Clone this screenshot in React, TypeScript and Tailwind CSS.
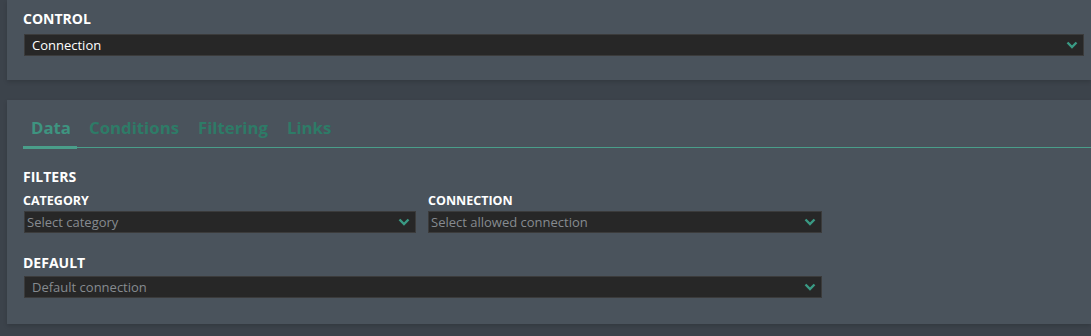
import React from 'react';

const Chevron: React.FC = () => (
  <svg width="12" height="8" viewBox="0 0 12 8" className="shrink-0">
    <polyline points="1.5,1.5 6,6 10.5,1.5" fill="none" stroke="#3a9a84" strokeWidth="2.4" />
  </svg>
);

const Select: React.FC<{ value: string; placeholder?: boolean; tight?: boolean; className?: string }> = ({
  value,
  placeholder,
  tight,
  className = '',
}) => (
  <div
    className={`flex h-[22px] items-center justify-between border border-[#3b3b3b] bg-[#272727] pr-[5px] ${
      tight ? 'pl-[2px]' : 'pl-[7px]'
    } ${className}`}
  >
    <span className={`text-[13px] leading-none ${placeholder ? 'text-[#868b90]' : 'text-white'}`}>{value}</span>
    <Chevron />
  </div>
);

const tabs = ['Data', 'Conditions', 'Filtering', 'Links'];

export default function App() {
  return (
    <div
      className="h-[336px] w-full overflow-hidden bg-[#3c434b] pl-[7px]"
      style={{ fontFamily: '"Open Sans", "Noto Sans", sans-serif' }}
    >
      <div className="flex h-[80px] flex-col bg-[#4a535c] pl-4 pr-[7px] pt-[9px] shadow-[0_2px_4px_rgba(0,0,0,0.15)]">
        <div className="text-[14px] font-bold leading-5 text-white">CONTROL</div>
        <Select value="Connection" className="mt-[5px] ml-px" />
      </div>

      <div className="mt-5 flex h-[224px] flex-col bg-[#4a535c] pl-4 pt-[17px] shadow-[0_2px_4px_rgba(0,0,0,0.15)]">
        <div className="flex">
          {tabs.map((t, i) => (
            <div
              key={t}
              className={`relative pb-[8px] pl-2 text-[16.8px] font-bold leading-[22px] ${
                i === 0 ? 'pr-[7px] text-[#3e9480]' : 'ml-[3px] pr-2 text-[#2e7b67]'
              }`}
            >
              {t}
              {i === 0 && <span className="absolute bottom-[-2px] left-0 right-[1px] h-[3px] bg-[#4a9e8a]" />}
            </div>
          ))}
        </div>
        <div className="h-px bg-[#4a9e8a]" />

        <div className="mt-[19px] text-[14px] font-bold leading-5 text-white">FILTERS</div>
        <div className="mt-[5px] flex">
          <div className="flex w-[405px] flex-col">
            <div className="text-[12.5px] font-bold leading-[17px] text-white">CATEGORY</div>
            <Select value="Select category" placeholder tight className="ml-px mt-[2px] w-[392px]" />
          </div>
          <div className="flex flex-col">
            <div className="text-[12.5px] font-bold leading-[17px] text-white">CONNECTION</div>
            <Select value="Select allowed connection" placeholder tight className="mt-[2px] w-[394px]" />
          </div>
        </div>

        <div className="mt-[20px] text-[14px] font-bold leading-5 text-white">DEFAULT</div>
        <Select value="Default connection" placeholder className="ml-px mt-[3px] w-[798px]" />
      </div>
    </div>
  );
}
